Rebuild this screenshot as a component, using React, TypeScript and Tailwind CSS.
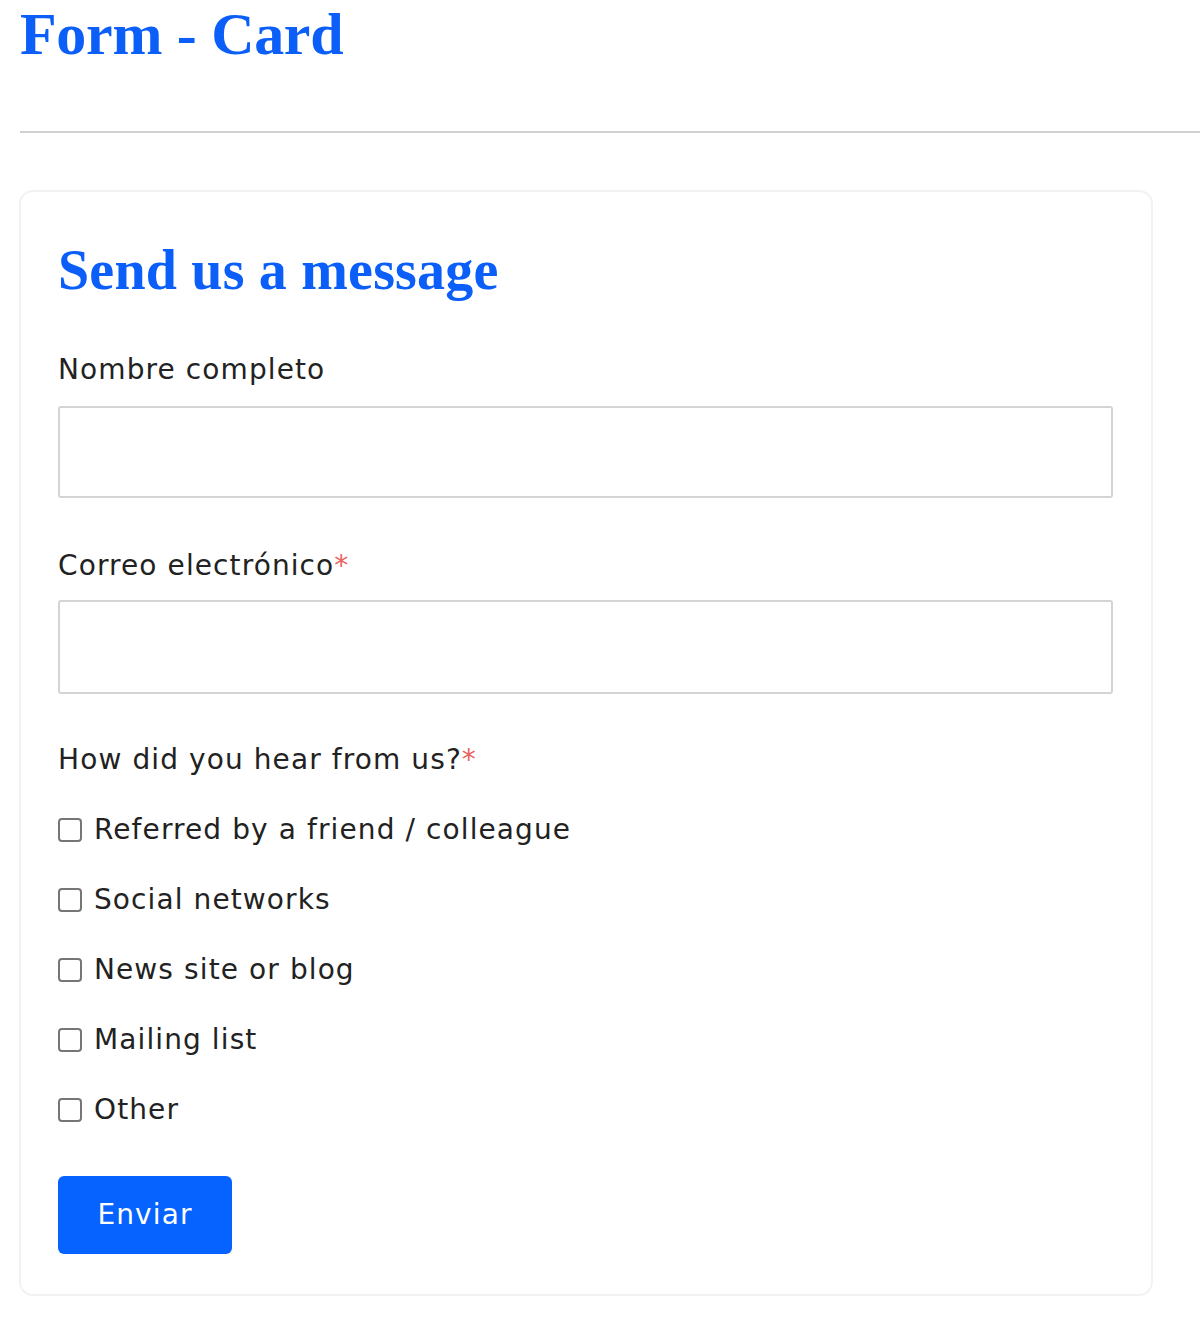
import React from "react";

const options = [
  "Referred by a friend / colleague",
  "Social networks",
  "News site or blog",
  "Mailing list",
  "Other",
];

const body = '"DejaVu Sans", "Open Sans", sans-serif';

export default function App() {
  return (
    <div className="bg-white min-h-[1320px] pl-[20px]" style={{ fontFamily: body }}>
      <h1
        className="text-[60px] leading-[68px] font-bold text-[#0b5ff8] tracking-[-0.3px]"
        style={{ fontFamily: '"Liberation Serif", serif' }}
      >
        Form - Card
      </h1>
      <div className="mt-[63px] h-[2px] bg-[#d0d0d0]" />
      <div className="mt-[57px] w-[1134px] border-2 border-[#f2f2f2] rounded-[14px] px-[37px] pt-[38px] pb-[40px] -ml-[1px]">
        <h2
          className="text-[56px] leading-[80px] font-bold text-[#0b5ff8] tracking-[0.2px]"
          style={{ fontFamily: '"Liberation Serif", serif' }}
        >
          Send us a message
        </h2>
        <div className="mt-[40px]">
          <label className="block text-[28px] leading-[40px] text-[#222] tracking-[1.1px]">Nombre completo</label>
          <div className="mt-[16px] h-[92px] w-[1055px] border-2 border-[#d4d4d4] rounded-[3px]" />
        </div>
        <div className="mt-[48px]">
          <label className="block text-[28px] leading-[40px] text-[#222] tracking-[1.1px]">
            Correo electrónico<span className="text-[#e8625e]">*</span>
          </label>
          <div className="mt-[14px] h-[94px] w-[1055px] border-2 border-[#d4d4d4] rounded-[3px]" />
        </div>
        <div className="mt-[46px]">
          <div className="text-[28px] leading-[40px] text-[#222] tracking-[1.1px]">
            How did you hear from us?<span className="text-[#e8625e]">*</span>
          </div>
          <div className="mt-[30px] flex flex-col gap-[30px]">
            {options.map((o) => (
              <label key={o} className="flex items-center h-[40px] text-[28px] text-[#222] tracking-[1.1px]">
                <span className="w-[24px] h-[24px] border-2 border-[#767676] rounded-[4px] mr-[12px] shrink-0" />
                {o}
              </label>
            ))}
          </div>
        </div>
        <button className="mt-[46px] w-[174px] h-[78px] bg-[#0663ff] text-white rounded-[6px] text-[28px] tracking-[1.1px]">
          Enviar
        </button>
      </div>
    </div>
  );
}
